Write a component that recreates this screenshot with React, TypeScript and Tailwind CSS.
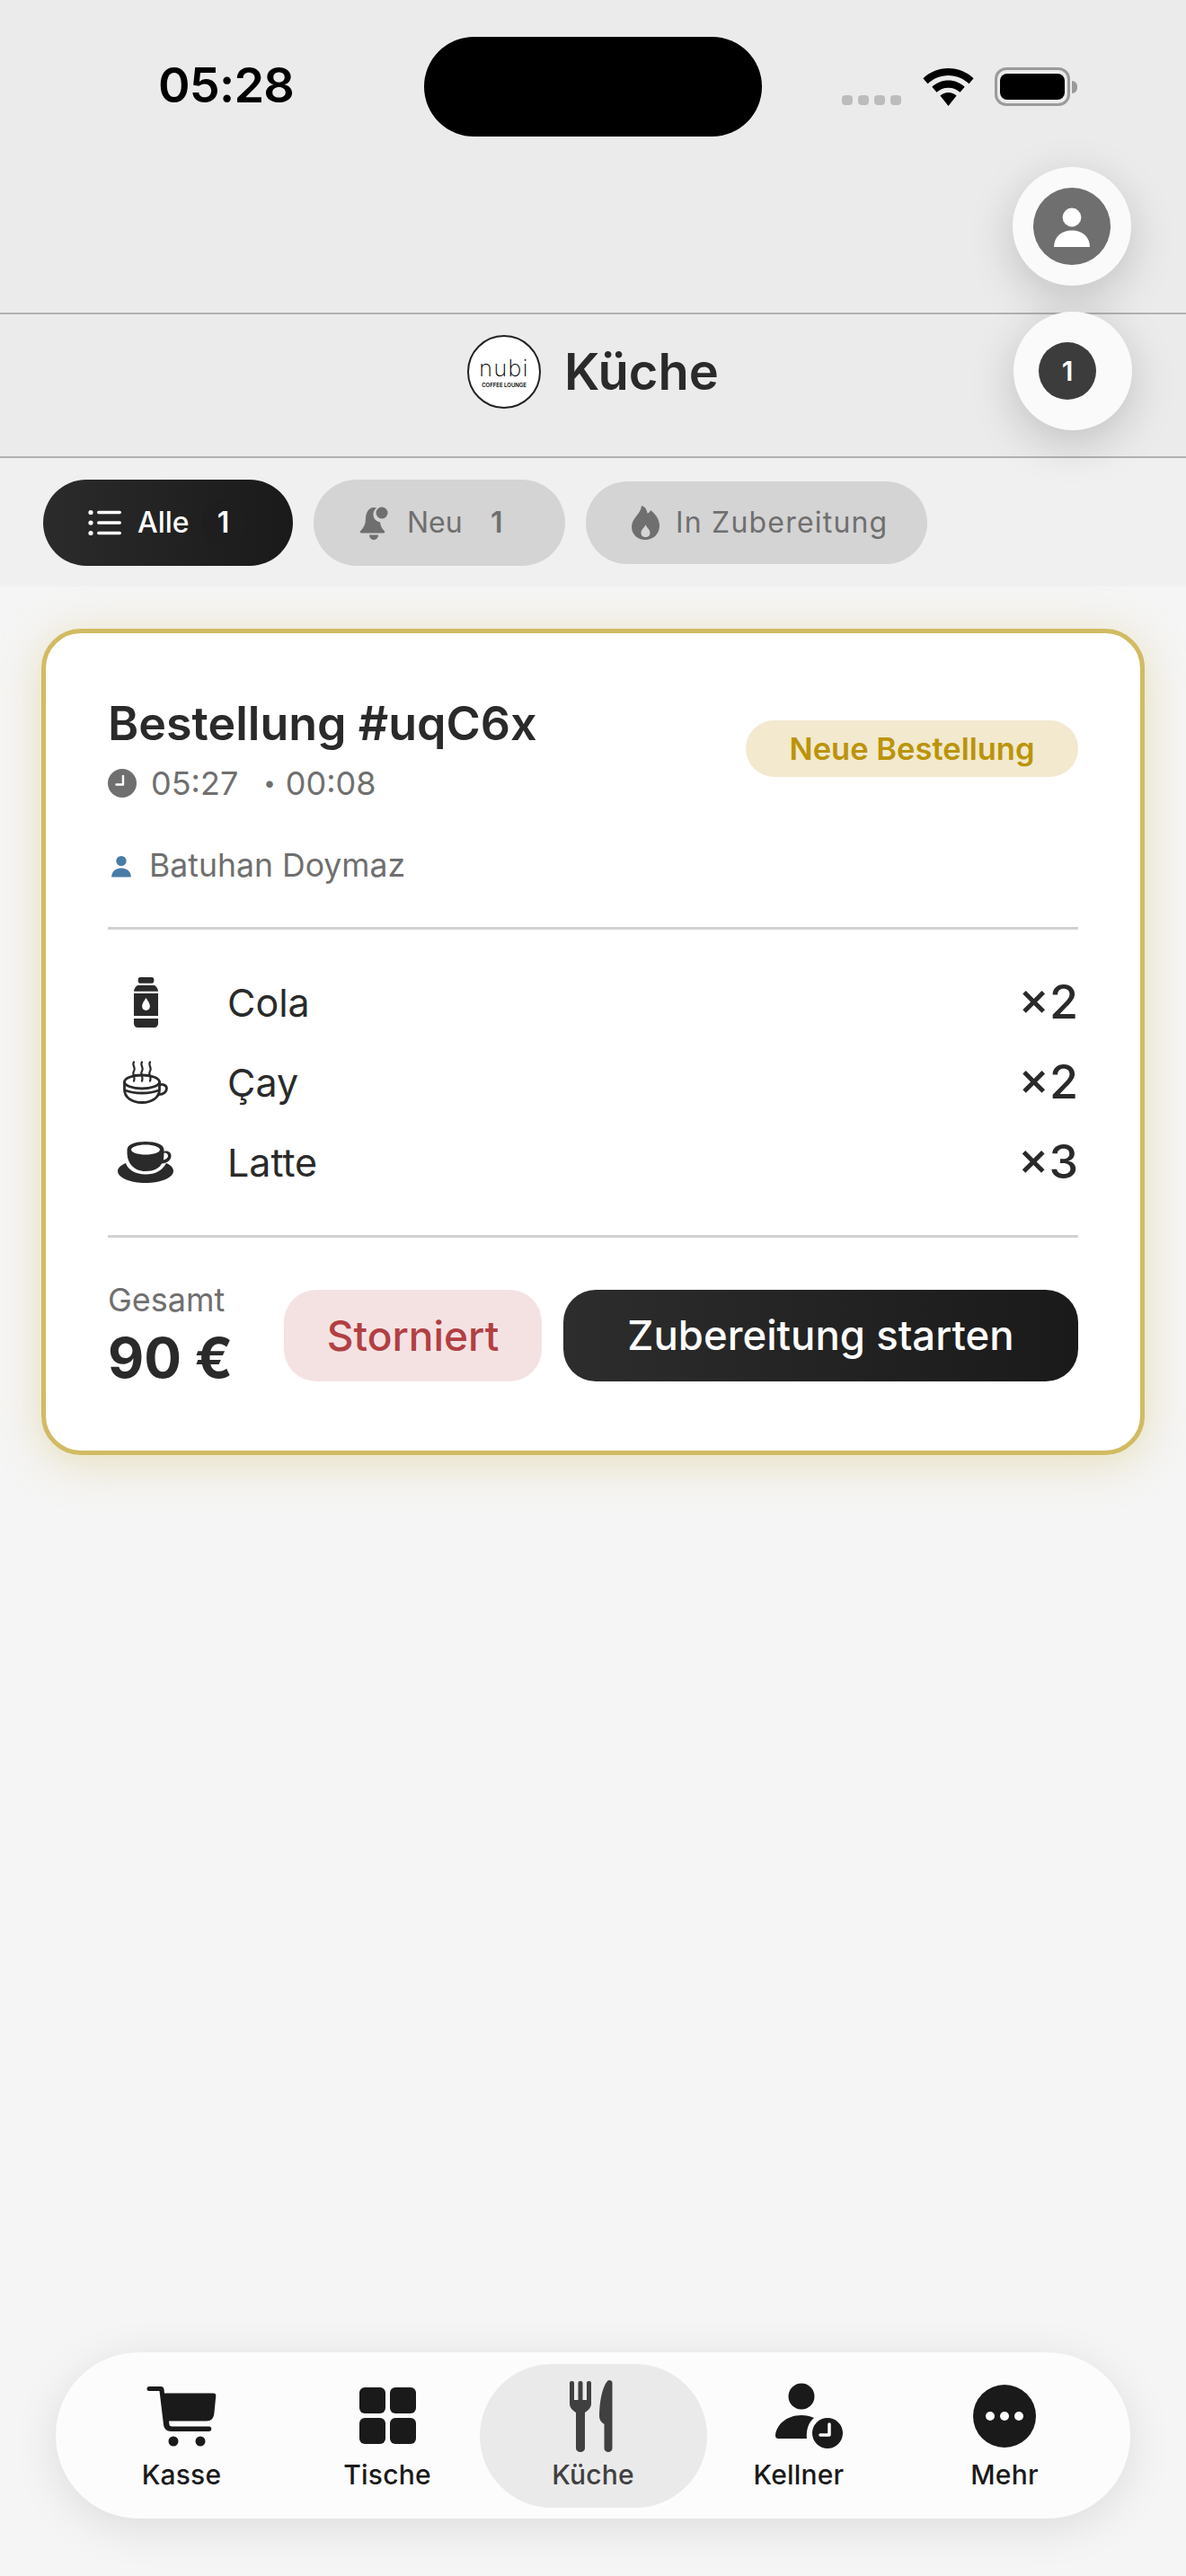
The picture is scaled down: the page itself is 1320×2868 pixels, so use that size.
import type { ReactNode } from 'react'

function WifiIcon() {
  return (
    <svg width="57" height="42" viewBox="0 0 57 42" fill="none">
      <path d="M28.5 0C17.5 0 7.6 4.3 0.4 11.3l5.2 6C11.5 11.6 19.6 8 28.5 8s17 3.6 22.9 9.3l5.2-6C49.4 4.300 39.500 0 28.500 0z" fill="#000" />
      <path d="M28.500 13.500c-7 0-13.400 2.700-18.200 7.200l5.200 6c3.400-3.100 8-5 13-5s9.600 1.900 13 5l5.200-6c-4.800-4.500-11.200-7.200-18.200-7.200z" fill="#000" />
      <path d="M28.500 27c-3.500 0-6.700 1.300-9.100 3.500L28.500 42l9.100-11.500C35.200 28.300 32 27 28.500 27z" fill="#000" />
    </svg>
  )
}

function BatteryIcon() {
  return (
    <div className="flex items-center gap-[2px]">
      <div className="flex h-[43px] w-[84px] items-center justify-center rounded-[13px] border-[3px] border-[#9a9a9a]">
        <div className="h-[29px] w-[72px] rounded-[8px] bg-black" />
      </div>
      <div className="h-[14px] w-[6px] rounded-r-full bg-[#9a9a9a]" />
    </div>
  )
}

function PersonGlyph({ size, color }: { size: number; color: string }) {
  return (
    <svg width={size} height={size} viewBox="0 0 24 24" fill={color}>
      <circle cx="12" cy="7" r="5.200" />
      <path d="M2 23.500c0-6 4.500-9.300 10-9.300s10 3.300 10 9.300z" />
    </svg>
  )
}

function ListIcon() {
  return (
    <svg width="38" height="30" viewBox="0 0 38 30" fill="#fff">
      <circle cx="3" cy="3.500" r="2.600" />
      <circle cx="3" cy="15" r="2.600" />
      <circle cx="3" cy="26.500" r="2.600" />
      <rect x="10" y="1.700" width="27" height="3.600" rx="1.800" />
      <rect x="10" y="13.200" width="27" height="3.600" rx="1.800" />
      <rect x="10" y="24.700" width="27" height="3.600" rx="1.800" />
    </svg>
  )
}

function BellIcon() {
  return (
    <svg width="36" height="38" viewBox="0 0 36 38" fill="#6f6f6f">
      <path d="M16 2c1 0 2 .2 3 .5-2.600 2-4 5-3.400 8.500.6 3.900 3.700 6.800 7.400 7.300.4 4.200 2 7.400 4.700 9.700 1 1 .5 2.500-1 2.500H2.300c-1.500 0-2-1.500-1-2.500C5 24.500 7 20 7 14.500 7 8 10.500 2 16 2z" />
      <circle cx="25" cy="8" r="6.500" />
      <path d="M11 32.500h10c0 3-2.200 5.500-5 5.500s-5-2.500-5-5.500z" />
    </svg>
  )
}

function FlameIcon() {
  return (
    <svg width="33" height="38" viewBox="0 0 33 38" fill="#6f6f6f">
      <path
        fillRule="evenodd"
        d="M12 0c5 1.500 6 5.500 6.500 8.500 2-.5 3-2 3.500-3.500 6 4.500 10 10.500 10 17.500C32 31.500 25 38 16 38S1 31.500 1 23.500C1 14 11.500 9 12 0zm4.500 21c-.5 3-5 5-5 9.500 0 3 2.200 4.500 5 4.500s5-1.700 5-4.800c0-3.700-3.800-5.700-5-9.200z"
      />
    </svg>
  )
}

function ClockIcon({ size }: { size: number }) {
  return (
    <svg width={size} height={size} viewBox="0 0 32 32">
      <circle cx="16" cy="16" r="16" fill="#6f6f6f" />
      <path d="M17 8v9.500H9.500" fill="none" stroke="#fff" strokeWidth="2.400" strokeLinecap="round" strokeLinejoin="round" />
    </svg>
  )
}

function BottleIcon() {
  return (
    <svg width="27" height="56" viewBox="0 0 26 50" preserveAspectRatio="none" fill="#2a2a2a">
      <rect x="4.500" y="0" width="17" height="6" rx="2.500" />
      <path d="M4 8h18c2.400 1.400 4 3.600 4 6H0c0-2.400 1.600-4.600 4-6z" />
      <path fillRule="evenodd" d="M0 16h26v22.500H0zM13 20.500c-2 3.200-4.200 5.500-4.200 8.300 0 2.500 1.900 4.200 4.200 4.200s4.200-1.700 4.200-4.200c0-2.800-2.200-5.100-4.200-8.300z" />
      <path d="M0 41h26v5c0 2.200-1.800 4-4 4H4c-2.200 0-4-1.800-4-4z" />
    </svg>
  )
}

function TeaIcon() {
  return (
    <svg width="50" height="48" viewBox="0 0 50 48" fill="none" stroke="#2a2a2a" strokeWidth="2.800" strokeLinecap="round">
      <ellipse cx="21" cy="23.500" rx="19.500" ry="7.500" />
      <path d="M1.500 24v8C1.500 41 10 46.500 21 46.500S40.500 41 40.500 32v-8" />
      <path d="M40.500 27c4-1.500 8 .5 8 4s-3.500 6.500-9 6.500" />
      <path d="M2.500 33c5 2 11 3 18.500 3s13.500-1 18.500-3" />
      <path d="M12 1.500c-2.500 3.500 2.500 6 0 10s2 6 0 11M21 1.500c-2.500 3.500 2.500 6 0 10s2 6 0 11M30 1.500c-2.500 3.500 2.500 6 0 10s2 6 0 11" strokeWidth="2.200" />
    </svg>
  )
}

function LatteIcon() {
  return (
    <svg width="62" height="46" viewBox="0 0 62 46" fill="#2a2a2a">
      <path
        fillRule="evenodd"
        d="M10.500 9C10.500 3 20 0 31 0s20.500 3 20.500 9v2C56 9.500 59.500 12 59.500 16c0 5-5 8-10.500 8.500C46 30 40 33 31 33 18 33 10.500 24 10.500 12zM15 9c0 3 7 5.500 16 5.500S47 12 47 9s-7-5.500-16-5.500S15 6 15 9zM51.500 12.500c0 2.500-.2 5.500-.6 8 3.100-.5 5.100-2.500 5.100-4.500s-1.800-4-4.500-3.500z"
      />
      <path d="M9 24c2 7 11 12.500 22 12.500S50 32 54 24c5 2 8 5 8 9 0 7-14 13-31 13S0 40 0 33c0-4 4-7 9-9z" />
    </svg>
  )
}

function CartIcon() {
  return (
    <svg width="78" height="70" viewBox="0 0 78 70" fill="#1a1a1a">
      <path d="M3 2h13c2 0 3.200 1 3.500 3l.5 4.500h54.500c2 0 3 1.100 2.800 3l-2 20c-.5 5-3.500 8-8.500 8H25l.4 3.500c.2 1.800 1.300 2.500 3 2.500h41.100a2.500 2.500 0 0 1 0 5.500h-42c-5 0-8-3-8.500-7.500L14.500 7H3a2.500 2.500 0 0 1 0-5z" />
      <circle cx="30" cy="63" r="5.500" />
      <circle cx="60" cy="63" r="5.500" />
    </svg>
  )
}

function GridIcon() {
  return (
    <div className="grid grid-cols-[29px_29px] gap-[5px]">
      <div className="h-[29px] rounded-[6px] bg-[#1a1a1a]" />
      <div className="h-[29px] rounded-[6px] bg-[#1a1a1a]" />
      <div className="h-[29px] rounded-[6px] bg-[#1a1a1a]" />
      <div className="h-[29px] rounded-[6px] bg-[#1a1a1a]" />
    </div>
  )
}

function CutleryIcon() {
  return (
    <svg width="48" height="80" viewBox="0 0 48 80" fill="#404040" className="mr-[4px]">
      <rect x="0" y="1" width="5" height="25" rx="2" />
      <rect x="9.500" y="1" width="5" height="25" rx="2" />
      <rect x="19" y="1" width="5" height="25" rx="2" />
      <path d="M0 22h24v4c0 5-4 8-7 10v40a5 4 0 0 1-10 0V36c-3-2-7-5-7-10z" />
      <path d="M44 0c2 0 3.500 1 3.500 3v73a4.500 4 0 0 1-9 0V49c-3.500-2-5.500-5-5.500-9C33 25 36 8 42 1c.6-.7 1.300-1 2-1z" />
    </svg>
  )
}

function WaiterIcon() {
  return (
    <svg width="75" height="73" viewBox="0 0 75 73" fill="#1a1a1a" className="ml-[22px]">
      <circle cx="29" cy="15" r="14.500" />
      <path d="M3 62c-2 0-3-1.500-3-3.500C1 47 12 36 29 36c5 0 10 1 14 3-6 5-9 13-8 23z" />
      <circle cx="58" cy="56" r="17" />
      <path d="M60 46v12H50" fill="none" stroke="#fff" strokeWidth="3.500" strokeLinecap="round" strokeLinejoin="round" />
    </svg>
  )
}

function MoreIcon() {
  return (
    <svg width="70" height="70" viewBox="0 0 70 70" fill="#1a1a1a">
      <circle cx="35" cy="35" r="35" />
      <circle cx="19" cy="35" r="5" fill="#fff" />
      <circle cx="35" cy="35" r="5" fill="#fff" />
      <circle cx="51" cy="35" r="5" fill="#fff" />
    </svg>
  )
}

function FilterPill({ active, icon, label, count, className }: { active?: boolean; icon: ReactNode; label: string; count?: string; className: string }) {
  return (
    <div className={`flex items-center rounded-full text-[32px] ${active ? 'bg-gradient-to-r from-[#2b2b2b] to-[#1a1a1a] font-medium text-white' : 'bg-[#d4d4d4] text-[#6f6f6f]'} ${className}`}>
      {icon}
      <span className="ml-[17px]">{label}</span>
      {count && (
        <span className={`ml-[13px] flex size-[50px] items-center justify-center rounded-full font-semibold ${active ? 'bg-[#1e1e1e]' : ''}`}>
          {count}
        </span>
      )}
    </div>
  )
}

const items = [
  { name: 'Cola', qty: '×2', icon: <BottleIcon /> },
  { name: 'Çay', qty: '×2', icon: <TeaIcon /> },
  { name: 'Latte', qty: '×3', icon: <LatteIcon /> },
]

const navItems = [
  { label: 'Kasse', icon: <CartIcon /> },
  { label: 'Tische', icon: <GridIcon /> },
  { label: 'Küche', icon: <CutleryIcon />, active: true },
  { label: 'Kellner', icon: <WaiterIcon /> },
  { label: 'Mehr', icon: <MoreIcon /> },
]

export default function App() {
  return (
    <div className="relative flex h-[2868px] w-[1320px] flex-col overflow-hidden bg-[#f5f5f5] font-[Inter,sans-serif] text-[#2a2a2a]">
      {/* status bar */}
      <div className="h-[348px] bg-[#ebebeb] pt-[41px]">
        <div className="relative flex h-[111px] items-start">
          <span className="ml-[176px] mt-[24px] w-[296px] text-[54px] leading-[1.1] font-semibold tracking-[-0.8px] text-black">05:28</span>
          <div className="h-[111px] w-[376px] rounded-[56px] bg-black" />
          <div className="ml-[89px] mt-[34px] flex items-end">
            <div className="mb-[1px] flex gap-[6px]">
              <div className="h-[11px] w-[12px] rounded-[4px] bg-[#bcbcbc]" />
              <div className="h-[11px] w-[12px] rounded-[4px] bg-[#bcbcbc]" />
              <div className="h-[11px] w-[12px] rounded-[4px] bg-[#bcbcbc]" />
              <div className="h-[11px] w-[12px] rounded-[4px] bg-[#bcbcbc]" />
            </div>
            <div className="ml-[24px]"><WifiIcon /></div>
            <div className="ml-[23px]"><BatteryIcon /></div>
          </div>
        </div>
      </div>

      {/* header */}
      <div className="flex h-[162px] items-center justify-center gap-[26px] border-y-2 border-[#b2b2b2] bg-[#ebebeb] pb-[30px]">
        <div className="flex size-[82px] flex-col items-center justify-center rounded-full border-2 border-[#222] bg-white">
          <span className="text-[25px] leading-[30px] font-extralight tracking-[1.5px] text-black">nubi</span>
          <span className="text-[6px] leading-[8px] font-semibold text-black">COFFEE LOUNGE</span>
        </div>
        <span className="text-[56px] leading-none font-semibold">Küche</span>
      </div>

      {/* filter row */}
      <div className="relative z-10 flex h-[143px] items-center gap-[23px] bg-[#f0f0f0] pl-[48px]">
        <FilterPill active icon={<ListIcon />} label="Alle" count="1" className="h-[96px] w-[278px] pl-[50px]" />
        <FilterPill icon={<BellIcon />} label="Neu" count="1" className="h-[96px] w-[280px] pl-[51px]" />
        <FilterPill icon={<FlameIcon />} label="In Zubereitung" className="h-[92px] w-[380px] pl-[50px] tracking-[1.2px]" />
      </div>

      {/* order card */}
      <div className="mx-[46px] mt-[47px] flex h-[920px] flex-col rounded-[44px] border-[5px] border-[#d1bb62] bg-white px-[69px] pt-[71px] shadow-[0_8px_50px_rgba(209,187,98,0.4)]">
        <div className="flex items-start justify-between">
          <div>
            <div className="text-[52px] leading-[60px] font-semibold">Bestellung #uqC6x</div>
            <div className="mt-[14px] flex items-center text-[36px] leading-[44px] text-[#6f6f6f]">
              <ClockIcon size={32} />
              <span className="ml-[16px]">05:27</span>
              <span className="ml-[28px] text-[24px]">•</span>
              <span className="ml-[11px]">00:08</span>
            </div>
          </div>
          <div className="mt-[26px] flex h-[63px] w-[370px] items-center justify-center rounded-full bg-[#f2e9cf] text-[34.5px] font-semibold text-[#bb9409]">
            Neue Bestellung
          </div>
        </div>
        <div className="mt-[48px] flex items-center text-[35.6px] leading-[44px] text-[#6f6f6f]">
          <span className="ml-[2px]"><PersonGlyph size={26} color="#4a7ba6" /></span>
          <span className="ml-[18px]">Batuhan Doymaz</span>
        </div>
        <div className="mt-[46px] h-[3px] bg-[#d2d2d2]" />
        <div className="mt-[51px] flex flex-col gap-[29px]">
          {items.map(item => (
            <div key={item.name} className="flex h-[60px] items-center">
              <div className="flex w-[84px] justify-center">{item.icon}</div>
              <span className="ml-[49px] text-[43px] leading-none">{item.name}</span>
              <span className="ml-auto text-[52px] leading-none font-medium">{item.qty}</span>
            </div>
          ))}
        </div>
        <div className="mt-[51px] h-[3px] bg-[#d2d2d2]" />
        <div className="mt-[47px] flex items-center">
          <div className="flex w-[196px] flex-col gap-[10px] pb-[4px]">
            <div className="text-[36px] leading-[44px] text-[#6f6f6f]">Gesamt</div>
            <div className="text-[62px] leading-[66px] font-bold">90 €</div>
          </div>
          <div className="flex h-[102px] w-[287px] items-center justify-center rounded-[36px] bg-[#f4e2e3] text-[46px] font-medium text-[#b23f43]">Storniert</div>
          <div className="ml-[24px] flex h-[102px] w-[573px] items-center justify-center rounded-[36px] bg-gradient-to-r from-[#2d2d2d] to-[#1a1a1a] text-[45.5px] font-medium text-white">Zubereitung starten</div>
        </div>
      </div>

      {/* bottom nav */}
      <div className="mx-[62px] mb-[64px] mt-auto flex h-[185px] items-center justify-center rounded-full bg-[#fcfcfc] shadow-[0_10px_50px_rgba(0,0,0,0.1)]">
        {navItems.map(item => (
          <div
            key={item.label}
            className={`flex flex-col items-center ${item.active ? '-mx-[12px] h-[160px] w-[253px] rounded-full bg-[#eaeaea] text-[#404040]' : 'h-[160px] w-[229px] text-[#1a1a1a]'}`}
          >
            <div className="flex h-[105px] items-center justify-center pt-[11px]">{item.icon}</div>
            <span className="text-[30px] leading-[36px] font-medium tracking-[0.2px]">{item.label}</span>
          </div>
        ))}
      </div>

      {/* floating buttons */}
      <div className="absolute left-[1127px] top-[186px] z-20 flex size-[132px] items-center justify-center rounded-full bg-[#fafafa] shadow-[0_14px_50px_rgba(0,0,0,0.18)]">
        <div className="flex size-[86px] items-center justify-center rounded-full bg-[#6f6f6f]">
          <PersonGlyph size={48} color="#fff" />
        </div>
      </div>
      <div className="absolute left-[1128px] top-[347px] z-20 flex size-[132px] items-center justify-center rounded-full bg-[#fafafa] shadow-[0_14px_50px_rgba(0,0,0,0.18)]">
        <div className="mr-[12px] flex size-[64px] items-center justify-center rounded-full bg-[#3c3c3c] text-[30px] font-semibold text-white">1</div>
      </div>
    </div>
  )
}
